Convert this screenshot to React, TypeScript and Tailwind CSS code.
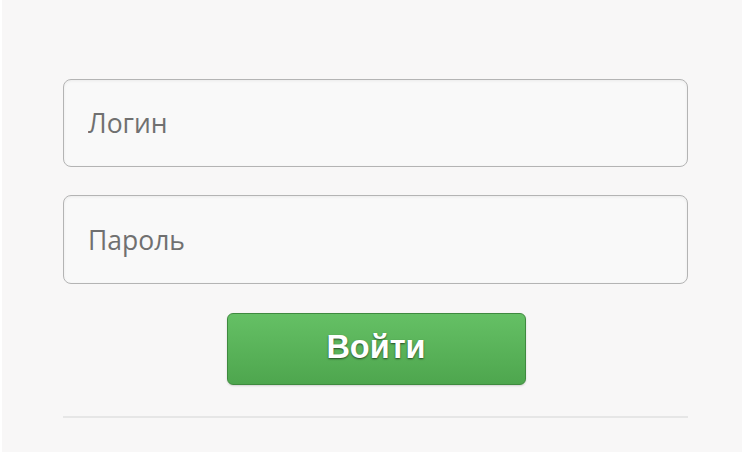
export default function App() {
  return (
    <div className="w-[752px] h-[458px] bg-white">
      <div className="ml-[2px] w-[740px] h-[452px] bg-[#f8f7f7] pt-[79px] pl-[61px] pr-[54px]">
        <form className="flex flex-col">
          <input
            type="text"
            placeholder="Логин"
            className="h-[88px] w-full rounded-[8px] border border-[#b4b4b4] bg-[#f9f9f9] pl-[24px] text-[26.5px] text-[#666] placeholder:text-[#707070] shadow-[inset_0_1px_3px_rgba(0,0,0,0.06)] outline-none font-['Open_Sans',sans-serif]"
          />
          <input
            type="password"
            placeholder="Пароль"
            className="mt-[28px] h-[89px] w-full rounded-[8px] border border-[#b4b4b4] bg-[#f9f9f9] pl-[24px] text-[26.5px] text-[#666] placeholder:text-[#707070] shadow-[inset_0_1px_3px_rgba(0,0,0,0.06)] outline-none font-['Open_Sans',sans-serif]"
          />
          <div className="mt-[29px] flex justify-center">
            <button
              type="button"
              className="ml-[1px] h-[72px] w-[299px] rounded-[6px] border border-[#3f8a3f] bg-gradient-to-b from-[#65c065] to-[#4ea64e] pb-[3px] text-[32.5px] font-bold text-white [text-shadow:0_1px_2px_rgba(0,0,0,0.6)] shadow-[0_1px_2px_rgba(0,0,0,0.15)] font-['Liberation_Sans',Arial,sans-serif]"
            >
              Войти
            </button>
          </div>
          <div className="mt-[31px] h-[2px] w-full bg-[#e6e6e6]" />
        </form>
      </div>
    </div>
  );
}
